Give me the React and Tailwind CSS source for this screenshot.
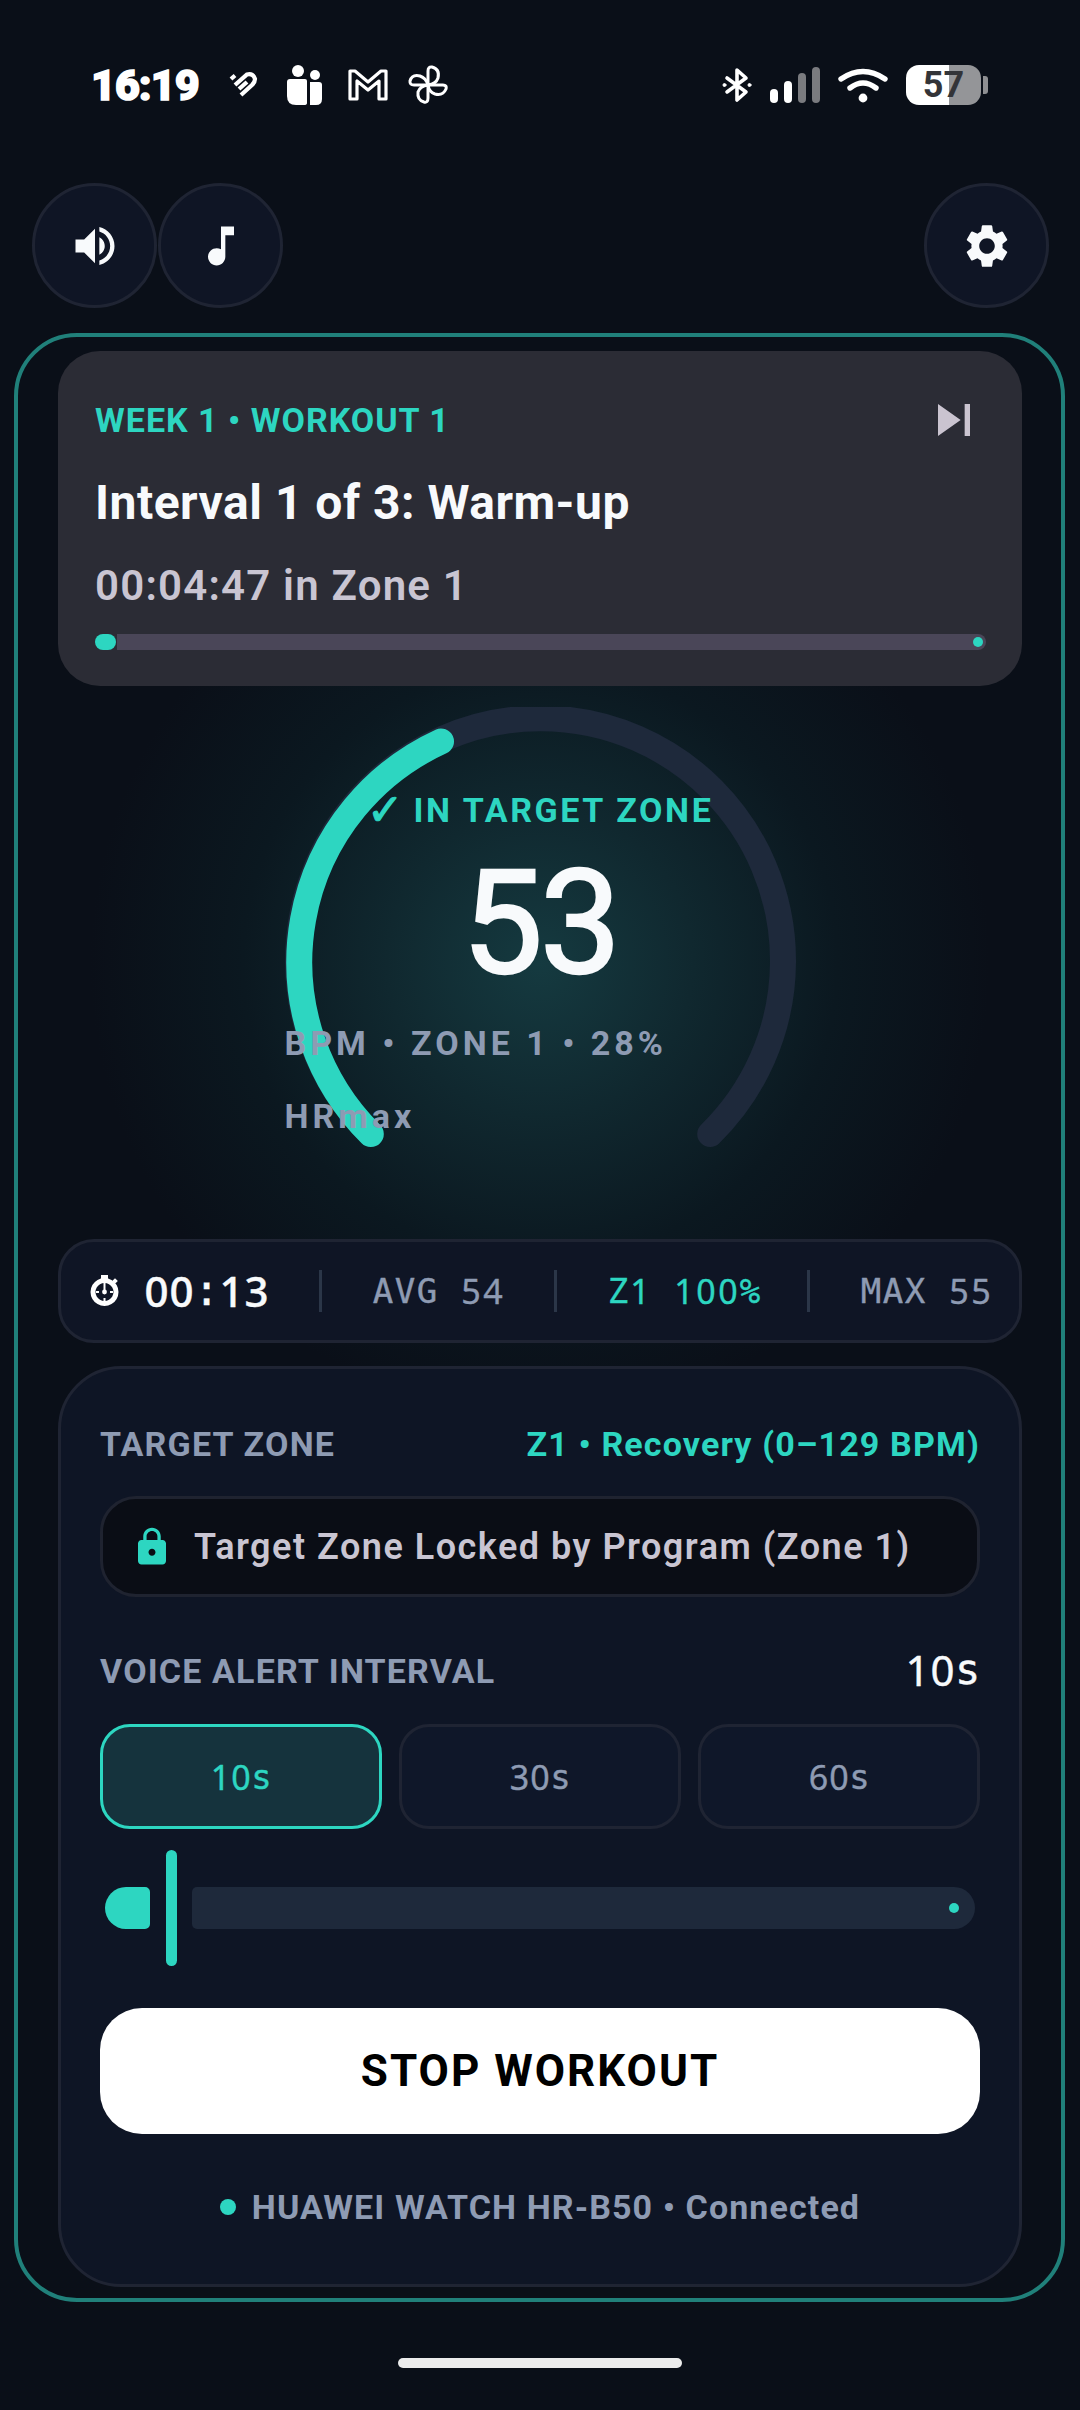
const TEAL = "#2dd6c1";

// monospaced text, one fixed cell per character (the picture uses a plain-zero mono face)
const Mono = ({ text, cell, className }) => (
  <span className={`inline-flex [-webkit-text-stroke:0.4px] ${className}`}>
    {text.split("").map((c, i) => (
      <span
        key={i}
        className={`inline-block text-center whitespace-pre ${/[0-9]/.test(c) ? "font-['Noto_Sans',sans-serif]" : "font-['DejaVu_Sans_Mono',monospace]"}`}
        style={{ width: cell }}
      >
        {c}
      </span>
    ))}
  </span>
);

const MIcon = ({ d, size = 52, color = "#f8fafc" }) => (
  <svg width={size} height={size} viewBox="0 0 24 24" fill={color}>
    <path d={d} />
  </svg>
);

const StatusBar = () => (
  <div className="h-[183px] pt-[65px] pl-[91px] pr-[92px] flex items-start justify-between">
    <div className="flex items-center h-[40px]">
      <span className="font-['Roboto',sans-serif] font-black text-[43px] leading-[40px] text-white tracking-[-1px] [-webkit-text-stroke:1.5px_white] w-[137px]">16:19</span>
      {/* health */}
      <svg width="30" height="28" viewBox="0 0 30 28" fill="none" stroke="white" strokeWidth="4.2" className="mr-[28px]">
        <path d="M3 8 L7 4.5" />
        <path d="M7 14 L19 3.5 Q25 2 27 8 Q27 11 24 14 L13 24" />
        <path d="M11 18 L19 11" />
      </svg>
      {/* people */}
      <svg width="38" height="40" viewBox="0 0 38 40" fill="white" className="mr-[24px]">
        <circle cx="12" cy="6" r="6" />
        <circle cx="29" cy="10" r="5" />
        <path d="M4 14 H19 Q21 14 21 16 V38 Q21 40 18 40 H10 Q1 40 1 31 V17 Q1 14 4 14 Z" />
        <path d="M24 17 H33 Q36 17 36 20 V34 Q36 40 30 40 H24 Z" />
      </svg>
      {/* gmail */}
      <svg width="40" height="32" viewBox="0 0 40 32" fill="none" stroke="white" strokeWidth="3.2" strokeLinejoin="round" className="mr-[20px]">
        <path d="M2 2 H7 L20 13 L33 2 H38 V30 H31 V12 L20 21 L9 12 V30 H2 Z" />
      </svg>
      {/* pinwheel */}
      <svg width="40" height="40" viewBox="0 0 40 40" fill="none" stroke="white" strokeWidth="3" strokeLinejoin="round">
        <path d="M20 20 V6 Q20 1.5 24 2 Q32 4 30 13 Q28 19 20 20 Z" />
        <path d="M20 20 H35 Q39 20 38 24 Q35 31 27 29 Q21 27 20 20 Z" />
        <path d="M20 20 V33 Q20 38 16 37 Q9 35 10 27 Q12 21 20 20 Z" />
        <path d="M20 20 H6 Q1.5 20 2 16 Q4 9 12 11 Q18 13 20 20 Z" />
      </svg>
    </div>
    <div className="flex items-center h-[40px]">
      {/* bluetooth */}
      <svg width="30" height="36" viewBox="0 0 30 36" fill="none" stroke="white" strokeWidth="3.6" strokeLinejoin="round" strokeLinecap="round" className="mr-[18px]">
        <path d="M5 11 L24 25 L15 33 V3 L24 11 L5 25" />
        <circle cx="2.5" cy="18" r="1.5" fill="white" strokeWidth="1" />
        <circle cx="27.5" cy="18" r="1.5" fill="white" strokeWidth="1" />
      </svg>
      {/* signal */}
      <div className="flex items-end gap-[6px] h-[36px] mr-[18px]">
        <div className="w-[8px] h-[14px] rounded-full bg-white"></div>
        <div className="w-[8px] h-[22px] rounded-full bg-white"></div>
        <div className="w-[8px] h-[30px] rounded-full bg-[#7a7b7f]"></div>
        <div className="w-[8px] h-[36px] rounded-full bg-[#7a7b7f]"></div>
      </div>
      {/* wifi */}
      <svg width="50" height="36" viewBox="0 0 50 36" fill="none" stroke="white" strokeWidth="5.4" strokeLinecap="round" className="mr-[18px]">
        <path d="M3 12 Q25 -3 47 12" />
        <path d="M12 21 Q25 11 38 21" />
        <circle cx="25" cy="31" r="4.4" fill="white" stroke="none" />
      </svg>
      {/* battery */}
      <div className="w-[75px] h-[40px] rounded-[13px] bg-[linear-gradient(90deg,#ffffff_43px,#949598_43px)] flex items-center justify-center font-['Roboto',sans-serif] font-bold text-[36px] leading-[40px] text-[#333438]">
        57
      </div>
      <div className="w-[5px] h-[18px] ml-[2px] rounded-r-[3px] bg-[#8e8f92]"></div>
    </div>
  </div>
);

const RoundButton = ({ children }) => (
  <button className="w-[125px] h-[125px] rounded-full bg-[#0f1525] border-[3px] border-[#1f2433] flex items-center justify-center">
    {children}
  </button>
);

const Stopwatch = () => (
  <svg width="30" height="32" viewBox="0 0 30 32" fill="white" className="mr-[24px]">
    <rect x="11" y="0" width="7" height="4" />
    <rect x="23" y="4" width="4" height="4" transform="rotate(45 25 6)" />
    <path fillRule="evenodd" d="M14.5 3 a14 14 0 1 0 0.01 0 Z M14.5 8 a9 9 0 1 1 -0.01 0 Z" />
    <rect x="13.5" y="6" width="2" height="12" />
    <circle cx="14.5" cy="17" r="2.4" />
    <rect x="13.5" y="23" width="2" height="3" />
    <rect x="6" y="16" width="3" height="2" />
    <rect x="20" y="16" width="3" height="2" />
  </svg>
);

const Divider = () => <div className="w-[3px] h-[42px] bg-[#2b3648]"></div>;

const Gauge = () => (
  <div className="relative h-[553px] flex items-center justify-center">
    <div className="absolute left-1/2 top-1/2 -translate-x-1/2 -translate-y-1/2 w-[900px] h-[900px] rounded-full bg-[radial-gradient(circle_closest-side,#153a40_0%,#10282f_34%,#0b1820_66%,transparent_100%)] pointer-events-none"></div>
    <div className="relative w-[511px] h-[511px]">
      <svg width="511" height="511" viewBox="0 0 511 511" fill="none" strokeWidth="26" strokeLinecap="round">
        <path d="M85.8 427 A242.5 242.5 0 1 1 425.2 427" stroke="#1e293b" />
        <path d="M85.8 427 A242.5 242.5 0 0 1 156 34.5" stroke={TEAL} />
      </svg>
      <div className="absolute inset-0 pt-[80px] flex flex-col items-center font-['Roboto',sans-serif]">
        <div className="flex items-center h-[46px] text-[34px] leading-[46px] font-bold tracking-[2.6px] whitespace-nowrap" style={{ color: TEAL }}>
          <span className="font-['DejaVu_Sans',sans-serif] text-[44px] font-bold tracking-normal mr-[10px] [-webkit-text-stroke:1px_#2dd6c1]">✓</span>
          IN TARGET ZONE
        </div>
        <div className="mt-[19px] text-[144px] leading-[144px] font-normal tracking-[-3px] text-[#f8fafc] [-webkit-text-stroke:2.5px_#f8fafc]">53</div>
        <div className="mt-[11px] w-full text-[34px] leading-[73px] font-bold tracking-[4px] text-[#8e9bb3]">
          BPM • ZONE 1 • 28%
          <br />
          HRmax
        </div>
      </div>
    </div>
  </div>
);

const IntervalChip = ({ label, active }) => (
  <button className={`flex-1 h-[105px] rounded-[30px] border-[3px] flex items-center justify-center ${active ? "bg-[#15333d] border-[#2dd6c1] text-[#2dd6c1]" : "bg-[#0f1729] border-[#1f2433] text-[#8e9bb3]"}`}>
    <Mono text={label} cell="20.5px" className="text-[34px] leading-none" />
  </button>
);

const Settings = () => (
  <div className="relative z-10 h-[921px] rounded-[63px] bg-[#0e1525] border-[3px] border-[#1f2433] px-[39px] pt-[55px] font-['Roboto',sans-serif]">
    <div className="flex items-center justify-between h-[40px]">
      <span className="text-[34px] font-bold tracking-[1.2px] text-[#8e9bb3]">TARGET ZONE</span>
      <span className="text-[34px] font-bold tracking-[1.15px]" style={{ color: TEAL }}>Z1 • Recovery (0–129 BPM)</span>
    </div>
    <div className="mt-[32px] h-[101px] rounded-[36px] bg-[#0a0d15] border-[3px] border-[#1f2330] flex items-center pl-[28px] gap-[21px]">
      <MIcon size={42} color={TEAL} d="M18 8h-1V6c0-2.76-2.24-5-5-5S7 3.24 7 6v2H6c-1.1 0-2 .9-2 2v10c0 1.1.9 2 2 2h12c1.1 0 2-.9 2-2V10c0-1.1-.9-2-2-2zm-6 9c-1.1 0-2-.9-2-2s.9-2 2-2 2 .9 2 2-.9 2-2 2zm3.1-9H8.9V6c0-1.71 1.39-3.1 3.1-3.1 1.71 0 3.1 1.39 3.1 3.1v2z" />
      <span className="text-[36px] font-semibold tracking-[1.5px] text-[#c9c5d2] whitespace-nowrap">Target Zone Locked by Program (Zone 1)</span>
    </div>
    <div className="mt-[54px] flex items-center justify-between h-[40px]">
      <span className="text-[34px] font-bold tracking-[1.15px] text-[#8e9bb3]">VOICE ALERT INTERVAL</span>
      <Mono text="10s" cell="25px" className="text-[42px] leading-none text-[#f8fafc] pb-[2px]" />
    </div>
    <div className="mt-[33px] flex gap-[17px]">
      <IntervalChip label="10s" active />
      <IntervalChip label="30s" />
      <IntervalChip label="60s" />
    </div>
    <div className="mt-[21px] h-[116px] px-[5px] flex items-center">
      <div className="w-[45px] h-[42px] rounded-l-[21px] rounded-r-[5px]" style={{ background: TEAL }}></div>
      <div className="ml-[16px] w-[11px] h-[116px] rounded-full" style={{ background: TEAL }}></div>
      <div className="relative ml-[15px] flex-1 h-[42px] rounded-l-[5px] rounded-r-[21px] bg-[#1e293b]">
        <div className="absolute right-[16px] top-1/2 -translate-y-1/2 w-[10px] h-[10px] rounded-full" style={{ background: TEAL }}></div>
      </div>
    </div>
    <button className="mt-[42px] w-full h-[126px] rounded-[42px] bg-white text-black text-[44px] font-bold tracking-[2px]">
      STOP WORKOUT
    </button>
    <div className="mt-[53px] flex items-center justify-center gap-[16px] h-[40px]">
      <div className="w-[16px] h-[16px] rounded-full" style={{ background: TEAL }}></div>
      <span className="text-[34px] font-bold tracking-[1.1px] text-[#8e9bb3]">HUAWEI WATCH HR-B50 • Connected</span>
    </div>
  </div>
);

export default function App() {
  return (
    <div className="w-[1080px] h-[2410px] overflow-hidden bg-[#0a0f18] font-['Roboto',sans-serif]">
      <StatusBar />

      <div className="flex justify-between pl-[32px] pr-[31px]">
        <div className="flex gap-[1px]">
          <RoundButton>
            <MIcon d="M3 9v6h4l5 5V4L7 9H3zm13.5 3c0-1.77-1.02-3.29-2.5-4.03v8.05c1.48-.73 2.5-2.25 2.5-4.02zM14 3.23v2.06c2.89.86 5 3.54 5 6.71s-2.11 5.85-5 6.71v2.06c4.01-.91 7-4.49 7-8.77s-2.99-7.86-7-8.77z" />
          </RoundButton>
          <RoundButton>
            <MIcon d="M12 3v10.55c-.59-.34-1.27-.55-2-.55-2.21 0-4 1.79-4 4s1.79 4 4 4 4-1.79 4-4V7h4V3h-6z" />
          </RoundButton>
        </div>
        <RoundButton>
          <MIcon d="M19.14 12.94c.04-.3.06-.61.06-.94 0-.32-.02-.64-.07-.94l2.03-1.58c.18-.14.23-.41.12-.61l-1.92-3.32c-.12-.22-.37-.29-.59-.22l-2.39.96c-.5-.38-1.03-.7-1.62-.94l-.36-2.54c-.04-.24-.24-.41-.48-.41h-3.84c-.24 0-.43.17-.47.41l-.36 2.54c-.59.24-1.13.57-1.62.94l-2.39-.96c-.22-.08-.47 0-.59.22L2.74 8.87c-.12.21-.08.47.12.61l2.03 1.58c-.05.3-.09.63-.09.94s.02.64.07.94l-2.03 1.58c-.18.14-.23.41-.12.61l1.92 3.32c.12.22.37.29.59.22l2.39-.96c.5.38 1.03.7 1.62.94l.36 2.54c.05.24.24.41.48.41h3.84c.24 0 .44-.17.47-.41l.36-2.54c.59-.24 1.13-.56 1.62-.94l2.39.96c.22.08.47 0 .59-.22l1.92-3.32c.12-.22.07-.47-.12-.61l-2.01-1.58zM12 15.6c-1.98 0-3.6-1.62-3.6-3.6s1.62-3.6 3.6-3.6 3.6 1.62 3.6 3.6-1.62 3.6-3.6 3.6z" />
        </RoundButton>
      </div>

      <div className="relative mt-[25px] ml-[14px] mr-[15px] h-[1969px] rounded-[63px] border-4 border-[#20807a] pl-[40px] pr-[39px] pt-[14px]">
        <div className="relative z-10 h-[335px] rounded-[42px] bg-[#2b2c35] pl-[37px] pr-[36px] pt-[49px]">
          <div className="flex items-center justify-between h-[40px]">
            <span className="text-[34px] font-bold tracking-[1px]" style={{ color: TEAL }}>WEEK 1 • WORKOUT 1</span>
            <MIcon size={64} color="#cac4d0" d="M6 18l8.5-6L6 6v12zM16 6v12h2V6h-2z" />
          </div>
          <div className="mt-[35px] text-[48px] leading-[56px] font-bold tracking-[0.5px] text-[#f8fafc]">Interval 1 of 3: Warm-up</div>
          <div className="mt-[31px] text-[42px] leading-[48px] font-semibold tracking-[1.2px] text-[#c9c5d2]">00:04:47 in Zone 1</div>
          <div className="mt-[24px] flex items-center gap-[1px]">
            <div className="w-[21px] h-[16px] rounded-full" style={{ background: TEAL }}></div>
            <div className="relative flex-1 h-[16px] rounded-r-full rounded-l-[3px] bg-[#4a4658]">
              <div className="absolute right-[3px] top-[3px] w-[10px] h-[10px] rounded-full" style={{ background: TEAL }}></div>
            </div>
          </div>
        </div>

        <Gauge />

        <div className="relative z-10 h-[104px] rounded-[36px] bg-[#0f1525] border-[3px] border-[#1f2433] pl-[29px] flex items-center">
          <Stopwatch />
          <Mono text="00:13" cell="25px" className="text-[42px] leading-none font-medium text-[#f8fafc]" />
          <div className="ml-[50px] mr-[50px]"><Divider /></div>
          <Mono text="AVG 54" cell="22px" className="text-[34px] leading-none text-[#8e9bb3]" />
          <div className="ml-[50px] mr-[50px]"><Divider /></div>
          <Mono text="Z1 100%" cell="22px" className="text-[34px] leading-none text-[#2dd6c1]" />
          <div className="ml-[46px] mr-[50px]"><Divider /></div>
          <Mono text="MAX 55" cell="22px" className="text-[34px] leading-none text-[#8e9bb3]" />
        </div>

        <div className="h-[23px]"></div>
        <Settings />
      </div>

      <div className="mt-[56px] mx-auto w-[284px] h-[10px] rounded-full bg-[#ececec]"></div>
    </div>
  );
}
